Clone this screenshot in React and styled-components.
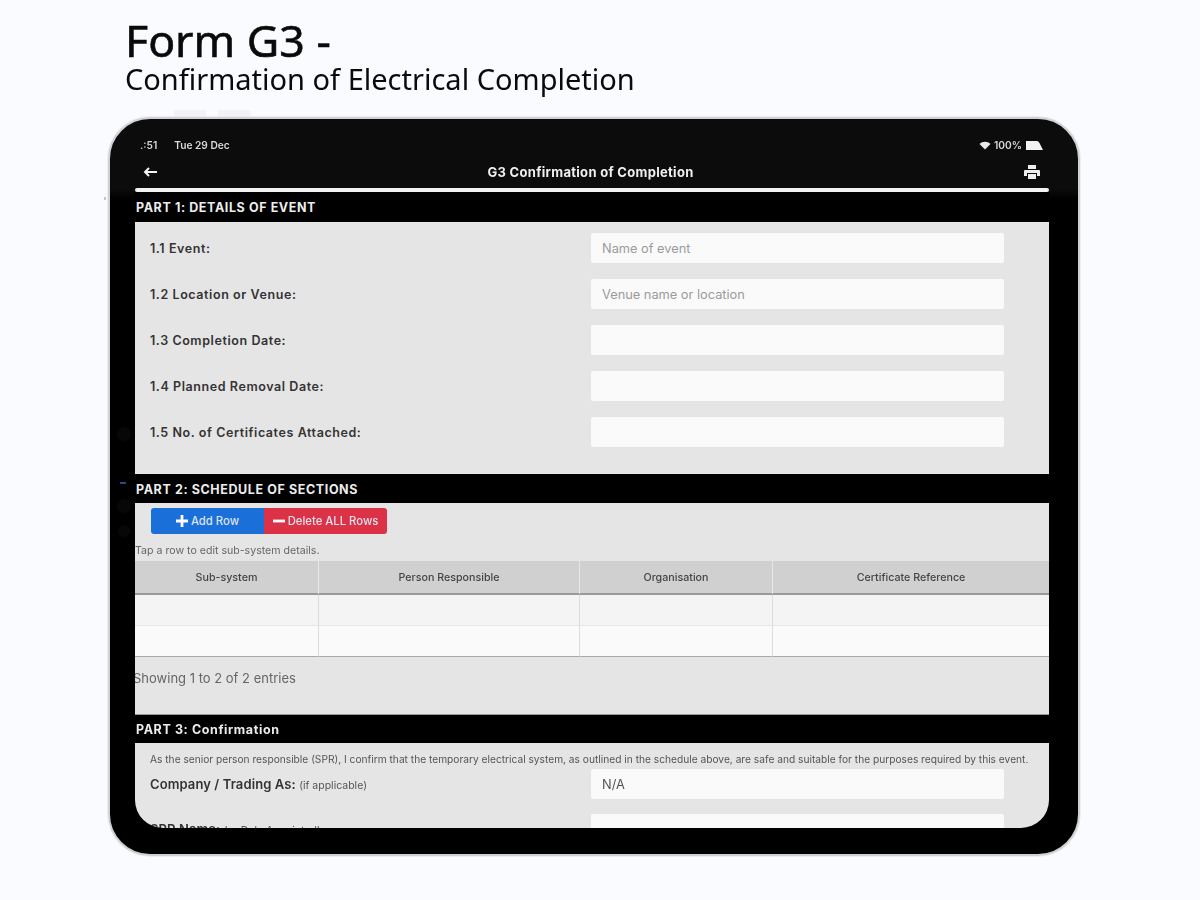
import React from "react";
import styled, { createGlobalStyle } from "styled-components";

const Global = createGlobalStyle`
  html, body { margin: 0; padding: 0; background: #f9fbff; }
  body { width: 1200px; height: 900px; overflow: hidden; font-family: "Inter", "Liberation Sans", sans-serif; }
`;

const Page = styled.div`
  width: 1200px;
  height: 900px;
  padding: 13px 0 0 108px;
  box-sizing: border-box;
  background: #f9fbff;
`;
const Heading = styled.div`
  margin-left: 17px;
  height: 97px;
  color: #0a0a0a;
  font-family: "Noto Sans", "Open Sans", sans-serif;
  filter: blur(0.5px);
`;
const Title = styled.h1`
  margin: 0;
  font-size: 44.6px;
  font-weight: 400;
  line-height: 54px;
  -webkit-text-stroke: 0.6px #0a0a0a;
`;
const Subtitle = styled.h2`
  margin: -6px 0 0 0;
  font-size: 29px;
  font-weight: 400;
  line-height: 36px;
`;
const DeviceFrame = styled.div`
  position: relative;
  margin-top: 7px;
  width: 972px;
  height: 739px;
  filter: blur(0.6px);
`;
const SideKey = styled.span`
  position: absolute;
  top: -7px;
  left: ${p => p.$x}px;
  width: ${p => p.$w}px;
  height: 6px;
  background: #f1f2f5;
  border-radius: 2px 2px 0 0;
`;
const EdgeMark = styled.span`
  position: absolute;
  left: -4px;
  top: 80px;
  width: 2px;
  height: 3px;
  background: #c4c6ca;
`;
const Sensor = styled.span`
  position: absolute;
  left: ${p => p.$x}px;
  top: ${p => p.$y}px;
  width: ${p => p.$s}px;
  height: ${p => p.$s}px;
  border-radius: 50%;
  background: #070708;
`;
const BlueDot = styled.span`
  position: absolute;
  left: 12px;
  top: 365px;
  width: 6px;
  height: 2px;
  background: #2a4a86;
`;
const Device = styled.div`
  width: 100%;
  height: 100%;
  box-sizing: border-box;
  border: 2px solid #cfd1d3;
  box-shadow: 0 0 0 1px #eceef1;
  border-radius: 42px;
  background: linear-gradient(#0c0c0c 0, #0c0c0c 70px, #000 80px);
  padding: 0 29px 26px 25px;
  overflow: hidden;
`;
const Screen = styled.div`
  height: 100%;
  border-radius: 0 0 28px 28px;
  overflow: hidden;
  display: flex;
  flex-direction: column;
`;
const StatusBar = styled.div`
  height: 40px;
  padding: 12px 6px 0 5px;
  box-sizing: border-box;
  display: flex;
  justify-content: space-between;
  align-items: center;
  color: #d8d8d8;
  font-size: 10.2px;
  font-weight: 600;
  flex: none;
`;
const StatusGroup = styled.div`
  display: flex;
  align-items: center;
  gap: ${p => p.$gap}px;
`;
const NavBar = styled.div`
  height: 25px;
  flex: none;
  display: flex;
  align-items: center;
  justify-content: space-between;
  padding: 0 9px 0 8px;
  color: #f0f0f0;
  font-size: 13px;
  font-weight: 700;
  letter-spacing: 0.3px;
`;
const Rule = styled.div`
  height: 4px;
  margin-top: 4px;
  flex: none;
  background: #f2f2f2;
  border-radius: 2px;
`;
const PartHeader = styled.div`
  height: ${p => p.$h}px;
  flex: none;
  background: #000;
  color: #ececec;
  font-size: 12.5px;
  font-weight: 700;
  letter-spacing: 0.6px;
  padding: 1px 0 0 1px;
  box-sizing: border-box;
  display: flex;
  align-items: center;
`;
const Panel = styled.div`
  flex: none;
  height: ${p => p.$h}px;
  background: #e5e5e5;
  box-sizing: border-box;
  border-bottom: ${p => (p.$line ? "1px solid #9a9a9a" : "0")};
`;
const FormRows = styled.div`
  padding-top: 11px;
  display: flex;
  flex-direction: column;
  gap: 16px;
`;
const Row = styled.div`
  display: grid;
  grid-template-columns: 441px 413px;
  align-items: center;
  height: 30px;
  padding-left: 15px;
`;
const Label = styled.div`
  font-size: ${p => p.$size || 12.5}px;
  font-weight: 600;
  letter-spacing: ${p => (p.$size ? "0.1px" : "0.58px")};
  color: #333;
  white-space: nowrap;
`;
const Note = styled.span`
  font-size: 10.5px;
  font-weight: 400;
  letter-spacing: 0;
  color: #555;
`;
const Field = styled.div`
  height: 30px;
  background: #fafafa;
  border-radius: 2px;
  padding-left: 11px;
  display: flex;
  align-items: center;
  font-size: 12.8px;
  color: ${p => (p.$value ? "#555" : "#9a9a9a")};
`;
const Buttons = styled.div`
  display: flex;
  padding: 5px 0 0 16px;
  height: 31px;
  box-sizing: border-box;
`;
const ActionButton = styled.div`
  width: ${p => p.$w}px;
  height: 26px;
  display: flex;
  align-items: center;
  justify-content: center;
  gap: 3px;
  background: ${p => p.$bg};
  border-radius: ${p => p.$radius};
  color: #dfe3ee;
  font-size: 11.3px;
  font-weight: 500;
`;
const Hint = styled.div`
  font-size: 10.6px;
  color: #666;
  height: 27px;
  line-height: 34px;
`;
const Grid = styled.div`
  display: grid;
  grid-template-columns: 183px 261px 193px 277px;
`;
const HeadCell = styled.div`
  height: 34px;
  background: #d0d0d0;
  border-bottom: 2px solid #999;
  border-left: ${p => (p.$first ? "0" : "1px solid #e8e8e8")};
  box-sizing: border-box;
  display: flex;
  align-items: center;
  justify-content: center;
  font-size: 10.7px;
  font-weight: 500;
  color: #444;
`;
const Cell = styled.div`
  height: 31px;
  background: ${p => (p.$odd ? "#f4f4f4" : "#fafafa")};
  border-left: ${p => (p.$first ? "0" : "1px solid #dcdcdc")};
  border-bottom: 1px solid ${p => (p.$last ? "#a8a8a8" : "#e6e6e6")};
  box-sizing: border-box;
`;
const Showing = styled.div`
  margin-left: -2px;
  padding-top: 13px;
  font-size: 13px;
  color: #666;
`;
const Declaration = styled.div`
  padding: 10px 0 0 15px;
  height: 26px;
  box-sizing: border-box;
  font-size: 10.2px;
  color: #555;
  white-space: nowrap;
`;
const ConfirmRows = styled.div`
  display: flex;
  flex-direction: column;
  gap: 15px;
`;

const Wifi = () => (
  <svg width="12" height="9" viewBox="0 0 22 18"><path fill="#e8e8e8" d="M11 17 0 6c6-6 16-6 22 0z" /></svg>
);
const Battery = () => (
  <svg width="18" height="9" viewBox="0 0 18 9"><path fill="#f2f2f2" d="M1 0h11c2 0 4 5 6 9H1z" /></svg>
);
const Back = () => (
  <svg width="14" height="10" viewBox="0 0 14 10"><path fill="none" stroke="#f4f4f4" strokeWidth="2" d="M14 5H2M6 1 2 5l4 4" /></svg>
);
const Printer = () => (
  <svg width="16" height="14" viewBox="0 0 16 14" fill="#eee">
    <path d="M4 0h8v4H4z" />
    <path d="M1 5h14a1 1 0 0 1 1 1v5h-3V8H3v3H0V6a1 1 0 0 1 1-1z" />
    <path d="M4 9h8v5H4z" />
  </svg>
);
const Plus = () => (
  <svg width="12" height="12" viewBox="0 0 12 12"><path fill="#fff" d="M4.6 0h2.8v4.6H12v2.8H7.4V12H4.6V7.4H0V4.6h4.6z" /></svg>
);
const Minus = () => (
  <svg width="12" height="12" viewBox="0 0 12 12"><path fill="#fff" d="M0 4.6h12v2.8H0z" /></svg>
);

const event = [
  ["1.1 Event:", "Name of event"],
  ["1.2 Location or Venue:", "Venue name or location"],
  ["1.3 Completion Date:", ""],
  ["1.4 Planned Removal Date:", ""],
  ["1.5 No. of Certificates Attached:", ""],
];
const columns = ["Sub-system", "Person Responsible", "Organisation", "Certificate Reference"];

export default function App() {
  return (
    <Page>
      <Global />
      <Heading>
        <Title>Form G3 -</Title>
        <Subtitle>Confirmation of Electrical Completion</Subtitle>
      </Heading>
      <DeviceFrame>
        <SideKey $x={66} $w={32} />
        <SideKey $x={110} $w={33} />
        <EdgeMark />
        <Device>
          <Screen>
            <StatusBar>
              <StatusGroup $gap={17}>
                <span>.:51</span>
                <span>Tue 29 Dec</span>
              </StatusGroup>
              <StatusGroup $gap={3}>
                <Wifi />
                <span>100%</span>
                <Battery />
              </StatusGroup>
            </StatusBar>
            <NavBar>
              <Back />
              <span>G3 Confirmation of Completion</span>
              <Printer />
            </NavBar>
            <Rule />
            <PartHeader $h={30}>PART 1: DETAILS OF EVENT</PartHeader>
            <Panel $h={252}>
              <FormRows>
                {event.map(([label, hint]) => (
                  <Row key={label}>
                    <Label>{label}</Label>
                    <Field>{hint}</Field>
                  </Row>
                ))}
              </FormRows>
            </Panel>
            <PartHeader $h={29}>PART 2: SCHEDULE OF SECTIONS</PartHeader>
            <Panel $h={212} $line>
              <Buttons>
                <ActionButton $w={113} $bg="#1a6fd8" $radius="3px 0 0 3px"><Plus />Add Row</ActionButton>
                <ActionButton $w={123} $bg="#dc3248" $radius="0 3px 3px 0"><Minus />Delete ALL Rows</ActionButton>
              </Buttons>
              <Hint>Tap a row to edit sub-system details.</Hint>
              <Grid>
                {columns.map((c, i) => <HeadCell key={c} $first={i === 0}>{c}</HeadCell>)}
                {columns.map((c, i) => <Cell key={c} $odd $first={i === 0} />)}
                {columns.map((c, i) => <Cell key={c} $last $first={i === 0} />)}
              </Grid>
              <Showing>Showing 1 to 2 of 2 entries</Showing>
            </Panel>
            <PartHeader $h={28}>PART 3: Confirmation</PartHeader>
            <Panel $h={100}>
              <Declaration>
                As the senior person responsible (SPR), I confirm that the temporary electrical system, as outlined in the schedule above, are safe and suitable for the purposes required by this event.
              </Declaration>
              <ConfirmRows>
                <Row>
                  <Label $size={13}>Company / Trading As: <Note>(if applicable)</Note></Label>
                  <Field $value>N/A</Field>
                </Row>
                <Row>
                  <Label $size={13}>SPR Name: <Note>(or Duly Appointed)</Note></Label>
                  <Field />
                </Row>
              </ConfirmRows>
            </Panel>
          </Screen>
        </Device>
        <Sensor $x={9} $y={310} $s={14} />
        <BlueDot />
        <Sensor $x={9} $y={382} $s={14} />
        <Sensor $x={10} $y={408} $s={12} />
      </DeviceFrame>
    </Page>
  );
}
